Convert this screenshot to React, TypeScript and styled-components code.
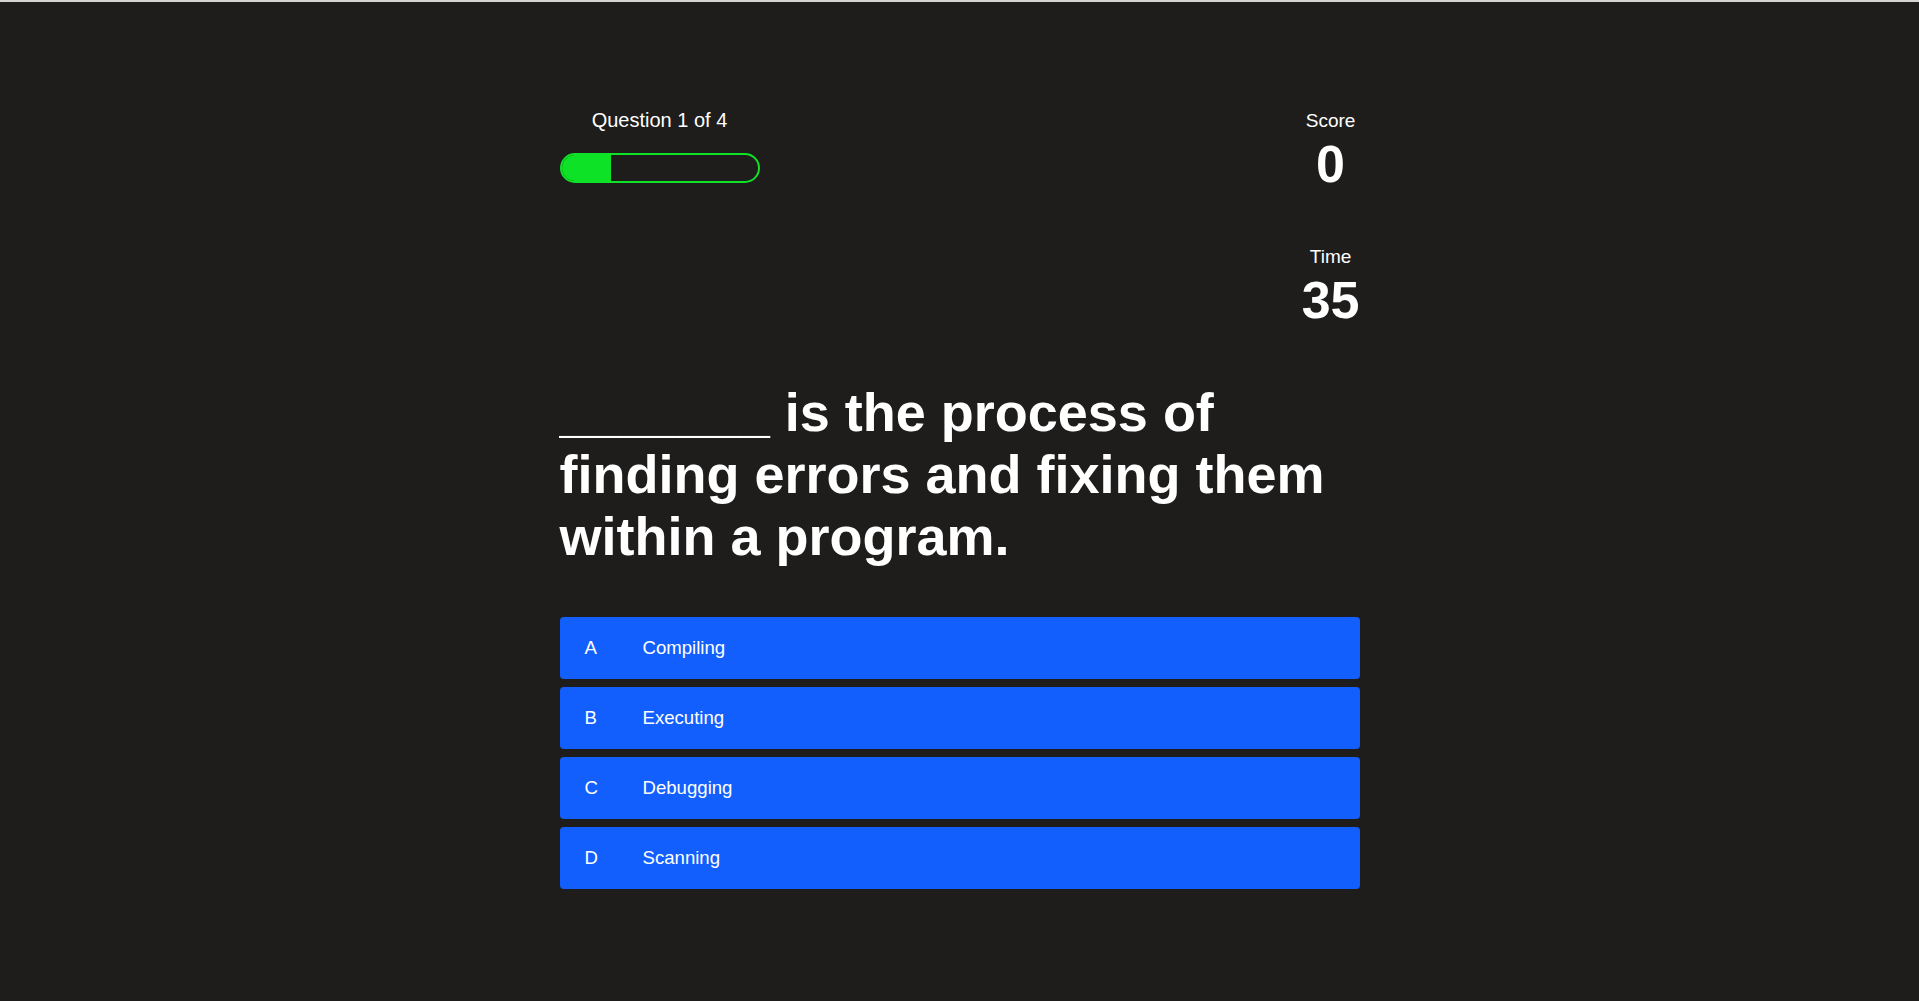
import React from 'react';
import styled, { createGlobalStyle } from 'styled-components';

const GlobalStyle = createGlobalStyle`
  html, body {
    margin: 0;
    padding: 0;
    background-color: #1e1d1b;
  }
  body {
    border-top: 2px solid #d4d4d4;
    font-family: "Liberation Sans", Arial, sans-serif;
    color: #ffffff;
    min-height: 999px;
  }
`;

const Page = styled.main`
  width: 800px;
  margin: 0 auto;
  padding-top: 107px;
  padding-bottom: 60px;
`;

const Header = styled.header`
  display: flex;
  justify-content: space-between;
  align-items: flex-start;
`;

const ProgressBlock = styled.div`
  display: flex;
  flex-direction: column;
  align-items: center;
  width: 200px;
  gap: 21px;
`;

const QuestionCount = styled.div`
  font-size: 20px;
  line-height: 23px;
`;

const ProgressTrack = styled.div`
  width: 200px;
  height: 30px;
  box-sizing: border-box;
  border: 2px solid #0ee226;
  border-radius: 15px;
  overflow: hidden;
  display: flex;
`;

const ProgressFill = styled.div`
  height: 100%;
  background-color: #0ee226;
`;

const Stats = styled.div`
  display: flex;
  flex-direction: column;
  align-items: center;
  gap: 56px;
  margin-top: 1px;
`;

const Stat = styled.div`
  display: flex;
  flex-direction: column;
  align-items: center;
  gap: 6px;
`;

const StatLabel = styled.div`
  font-size: 19px;
  line-height: 22px;
`;

const StatValue = styled.div`
  font-size: 52px;
  line-height: 52px;
  font-weight: 700;
`;

const Question = styled.h1`
  margin: 55px 0 50px;
  font-size: 54px;
  line-height: 62px;
  font-weight: 700;
`;

const Options = styled.ul`
  list-style: none;
  margin: 0;
  padding: 0;
  display: flex;
  flex-direction: column;
  gap: 8px;
`;

const Option = styled.li`
  display: flex;
  align-items: center;
  height: 62px;
  padding-left: 25px;
  border-radius: 4px;
  background-color: #125ffd;
  font-size: 18.6px;
  cursor: pointer;
`;

const OptionLetter = styled.span`
  width: 58px;
  flex-shrink: 0;
`;

const options = [
  { letter: 'A', text: 'Compiling' },
  { letter: 'B', text: 'Executing' },
  { letter: 'C', text: 'Debugging' },
  { letter: 'D', text: 'Scanning' },
];

const App: React.FC = () => {
  const current = 1;
  const total = 4;
  const progress = (current / total) * 100;

  return (
    <>
      <GlobalStyle />
      <Page>
        <Header>
          <ProgressBlock>
            <QuestionCount>Question {current} of {total}</QuestionCount>
            <ProgressTrack>
              <ProgressFill style={{ width: `${progress}%` }} />
            </ProgressTrack>
          </ProgressBlock>
          <Stats>
            <Stat>
              <StatLabel>Score</StatLabel>
              <StatValue>0</StatValue>
            </Stat>
            <Stat>
              <StatLabel>Time</StatLabel>
              <StatValue>35</StatValue>
            </Stat>
          </Stats>
        </Header>
        <Question>_______ is the process of finding errors and fixing them within a program.</Question>
        <Options>
          {options.map((option) => (
            <Option key={option.letter}>
              <OptionLetter>{option.letter}</OptionLetter>
              <span>{option.text}</span>
            </Option>
          ))}
        </Options>
      </Page>
    </>
  );
};

export default App;
